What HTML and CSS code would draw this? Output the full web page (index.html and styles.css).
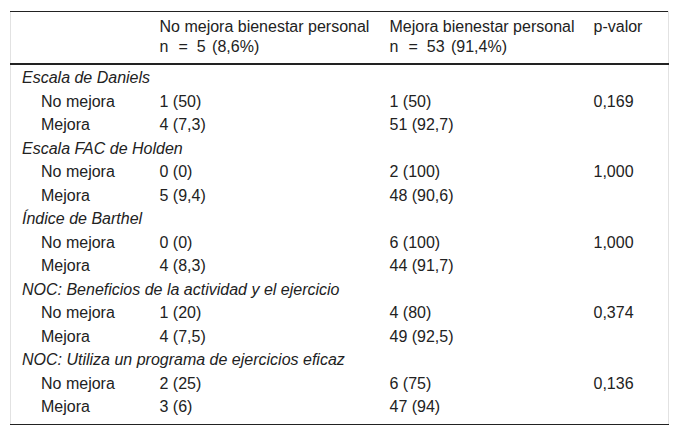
FILE: index.html
```html
<!DOCTYPE html>
<html lang="es">
<head>
<meta charset="utf-8">
<title>Tabla</title>
<link rel="stylesheet" href="styles.css">
</head>
<body>
<div class="wrap">
<table class="tbl">
  <colgroup>
    <col class="c1"><col class="c2"><col class="c3"><col class="c4">
  </colgroup>
  <thead>
    <tr>
      <th></th>
      <th>No mejora bienestar personal<br>n<span class="eq">=</span><span class="num">5 (8,6%)</span></th>
      <th>Mejora bienestar personal<br>n<span class="eq">=</span><span class="num">53 (91,4%)</span></th>
      <th>p-valor</th>
    </tr>
  </thead>
  <tbody>
    <tr class="grp"><td colspan="4">Escala de Daniels</td></tr>
    <tr><td class="ind">No mejora</td><td>1 (50)</td><td>1 (50)</td><td>0,169</td></tr>
    <tr><td class="ind">Mejora</td><td>4 (7,3)</td><td>51 (92,7)</td><td></td></tr>
    <tr class="grp"><td colspan="4">Escala FAC de Holden</td></tr>
    <tr><td class="ind">No mejora</td><td>0 (0)</td><td>2 (100)</td><td>1,000</td></tr>
    <tr><td class="ind">Mejora</td><td>5 (9,4)</td><td>48 (90,6)</td><td></td></tr>
    <tr class="grp"><td colspan="4">Índice de Barthel</td></tr>
    <tr><td class="ind">No mejora</td><td>0 (0)</td><td>6 (100)</td><td>1,000</td></tr>
    <tr><td class="ind">Mejora</td><td>4 (8,3)</td><td>44 (91,7)</td><td></td></tr>
    <tr class="grp"><td colspan="4">NOC: Beneficios de la actividad y el ejercicio</td></tr>
    <tr><td class="ind">No mejora</td><td>1 (20)</td><td>4 (80)</td><td>0,374</td></tr>
    <tr><td class="ind">Mejora</td><td>4 (7,5)</td><td>49 (92,5)</td><td></td></tr>
    <tr class="grp"><td colspan="4">NOC: Utiliza un programa de ejercicios eficaz</td></tr>
    <tr><td class="ind">No mejora</td><td>2 (25)</td><td>6 (75)</td><td>0,136</td></tr>
    <tr class="last"><td class="ind">Mejora</td><td>3 (6)</td><td>47 (94)</td><td></td></tr>
  </tbody>
</table>
</div>
</body>
</html>
```
FILE: styles.css
```css
html, body {
  margin: 0;
  padding: 0;
  background: #fff;
}
body {
  font-family: "Liberation Sans", Arial, sans-serif;
  font-size: 16px;
  color: #222;
}
.wrap {
  padding: 11px 10px 0 10px;
}
.tbl {
  width: 659px;
  border-collapse: collapse;
  table-layout: fixed;
  border-left: 1px solid #e2e2e2;
  border-right: 1px solid #e2e2e2;
  border-top: 1px solid #222;
  border-bottom: 1px solid #222;
}
.c1 { width: 143px; }
.c2 { width: 230px; }
.c3 { width: 204px; }
.c4 { width: auto; }
.tbl th {
  font-weight: normal;
  text-align: left;
  vertical-align: top;
  line-height: 20px;
  padding: 5px 6px 6px 6px;
  border-bottom: 2px solid #222;
  white-space: nowrap;
}
.tbl td {
  line-height: 19.5px;
  padding: 2px 6px 2px 6px;
  white-space: nowrap;
}
.tbl td:first-child {
  padding-left: 11px;
}
.tbl td.ind {
  padding-left: 30px;
}
.tbl tr.grp td {
  font-style: italic;
}
.tbl tbody tr:first-child td {
  padding-top: 3px;
}
.tbl tr.last td {
  padding-bottom: 7px;
}
.eq {
  display: inline-block;
  margin: 0 9px 0 10px;
}
.num {
  word-spacing: 2px;
}
```
